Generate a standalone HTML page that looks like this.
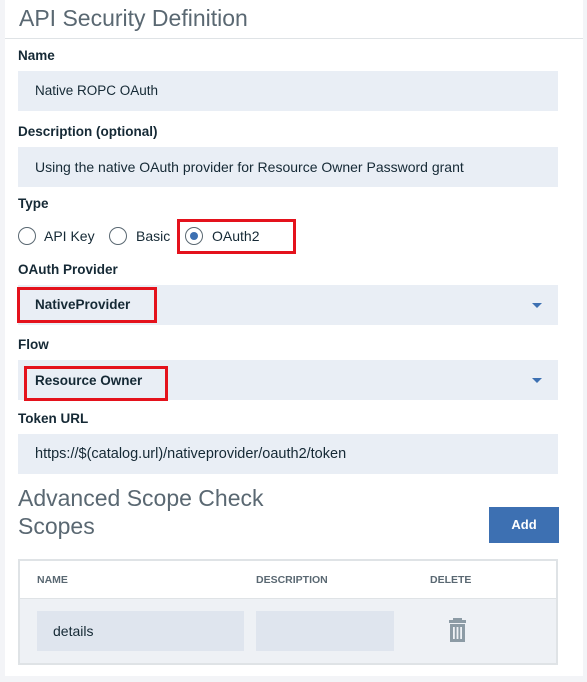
<!DOCTYPE html>
<html><head><style>
*{margin:0;padding:0;box-sizing:border-box}
body{width:587px;height:682px;background:#f3f4f7;font-family:"Liberation Sans",sans-serif;position:relative;overflow:hidden;color:#152935}
.card{position:absolute;left:5px;top:0;width:578px;height:676px;background:#fff}
.a{position:absolute}
.h{font-size:23px;color:#5a6872}
.lbl{font-size:13.5px;font-weight:bold;color:#152935}
.in{position:absolute;left:18px;width:540px;height:40px;background:#e9eef5;font-size:14px;padding-left:17px;line-height:40px;color:#152935}
.red{position:absolute;border:3px solid #e4121c}
.rad{position:absolute;width:18px;height:18px;border:1px solid #5a6872;border-radius:50%;top:227px}
.arr{position:absolute;right:16px;top:18px;width:0;height:0;border-left:5px solid transparent;border-right:5px solid transparent;border-top:5px solid #3d70b2}
.th{position:absolute;font-size:10.5px;font-weight:bold;color:#5a6872;top:574px}
</style></head><body>
<div class="card"></div>
<div class="a h" style="left:19px;top:5px;font-size:23px">API Security Definition</div>
<div class="a" style="left:5px;top:38px;width:578px;height:1px;background:#dfe3e6"></div>
<div class="a lbl" style="left:18px;top:48px">Name</div>
<div class="in" style="top:71px;font-size:13.5px">Native ROPC OAuth</div>
<div class="a lbl" style="left:18px;top:124px">Description (optional)</div>
<div class="in" style="top:147px">Using the native OAuth provider for Resource Owner Password grant</div>
<div class="a lbl" style="left:18px;top:196px">Type</div>
<div class="rad" style="left:18px"></div>
<div class="a" style="left:44px;top:228px;font-size:14px">API Key</div>
<div class="rad" style="left:109px"></div>
<div class="a" style="left:136px;top:228px;font-size:14px">Basic</div>
<div class="rad" style="left:185px"><div class="a" style="left:4px;top:4px;width:8px;height:8px;border-radius:50%;background:#3d70b2"></div></div>
<div class="a" style="left:212px;top:228px;font-size:14px">OAuth2</div>
<div class="red" style="left:177px;top:219px;width:119px;height:35px"></div>
<div class="a lbl" style="left:18px;top:262px">OAuth Provider</div>
<div class="in" style="top:285px;font-weight:bold;font-size:13.5px">NativeProvider<div class="arr"></div></div>
<div class="red" style="left:17px;top:287px;width:140px;height:36px"></div>
<div class="a lbl" style="left:18px;top:337px">Flow</div>
<div class="in" style="top:360px;font-weight:bold;line-height:42px;font-size:13.5px">Resource Owner<div class="arr"></div></div>
<div class="red" style="left:24px;top:366px;width:144px;height:35px"></div>
<div class="a lbl" style="left:18px;top:411px">Token URL</div>
<div class="in" style="top:434px;font-size:14.5px">https://$(catalog.url)/nativeprovider/oauth2/token</div>
<div class="a h" style="left:18px;top:485px">Advanced Scope Check</div>
<div class="a h" style="left:18px;top:513px">Scopes</div>
<div class="a" style="left:489px;top:507px;width:70px;height:36px;background:#3d70b2;color:#fff;font-size:13px;font-weight:bold;text-align:center;line-height:36px">Add</div>
<div class="a" style="left:18px;top:559px;width:540px;height:106px;border:2px solid #dfe3e6;background:#eef1f5">
<div class="a" style="left:0;top:0;width:536px;height:38px;background:#fff;border-bottom:1px solid #dfe3e6"></div>
</div>
<div class="th" style="left:37px">NAME</div>
<div class="th" style="left:256px">DESCRIPTION</div>
<div class="th" style="left:430px">DELETE</div>
<div class="a" style="left:37px;top:611px;width:207px;height:40px;background:#dfe5ee;font-size:14px;padding-left:16px;line-height:40px">details</div>
<div class="a" style="left:256px;top:611px;width:138px;height:40px;background:#dfe5ee"></div>
<svg class="a" style="left:448px;top:618px" width="19" height="25" viewBox="0 0 19 25"><rect x="5" y="0" width="9" height="2" fill="#8c9ba5"/><rect x="1" y="2" width="17" height="3" fill="#8c9ba5"/><path d="M2 6h15v18H2z M5 9v12h1.8V9z M8.6 9v12h1.8V9z M12.2 9v12h1.8V9z" fill="#8c9ba5" fill-rule="evenodd"/></svg>
</body></html>
